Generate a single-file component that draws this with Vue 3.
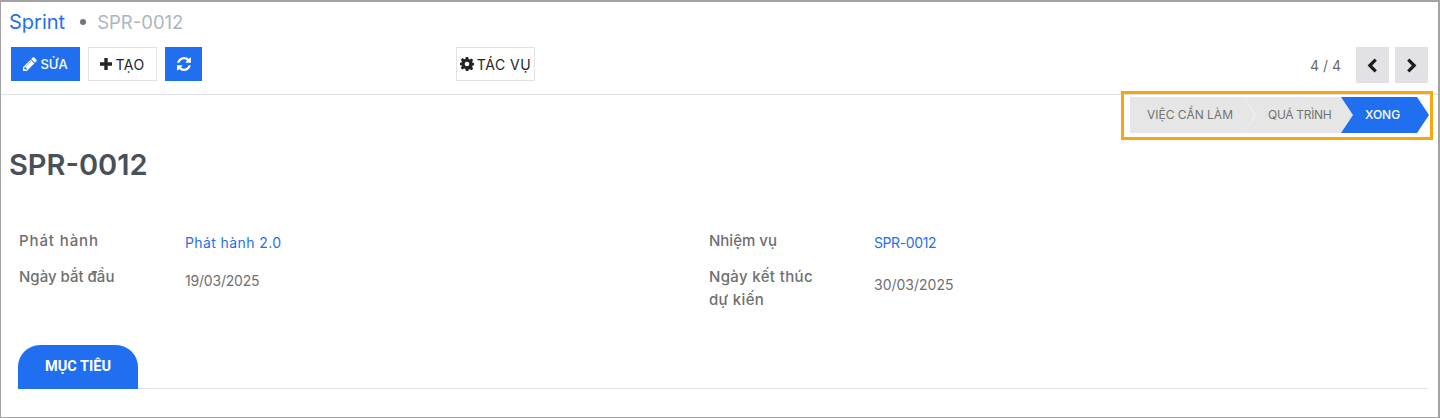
<template>
  <div class="page">
    <header class="panel">
      <div class="crumbs">
        <span class="crumb-link">Sprint</span>
        <span class="dot"></span>
        <span class="crumb-current">SPR-0012</span>
      </div>
      <div class="toolbar">
        <div class="left-actions">
          <button class="btn primary edit">
            <svg class="ico" viewBox="0 0 1536 1536" width="14" height="14"><path fill="currentColor" d="M363 1408l91-91-235-235-91 91v107h128v128h107zM886 480q0-22-22-22-10 0-17 7L305 1007q-7 7-7 17 0 22 22 22 10 0 17-7l542-542q7-7 7-17zM832 288l416 416-832 832H0v-416zM1515 384q0 53-37 90l-166 166-416-416 166-165q36-38 90-38 53 0 91 38l235 234q37 39 37 91z"/></svg>
            SỬA
          </button>
          <button class="btn outline create">
            <svg class="ico" viewBox="0 0 12 12" width="12" height="12"><path fill="currentColor" d="M4.3 0h3.400v4.300H12v3.400H7.700V12H4.300V7.700H0V4.300h4.300z"/></svg>
            TẠO
          </button>
          <button class="btn primary refresh">
            <svg viewBox="0 0 1536 1536" width="14" height="14"><path fill="currentColor" d="M1511 928q0 5-1 7-64 268-268 434.500T764 1536q-146 0-282.500-55T238 1324l-129 129q-19 19-45 19t-45-19-19-45V960q0-26 19-45t45-19h448q26 0 45 19t19 45-19 45l-137 137q71 66 161 102t187 36q134 0 250-65t186-179q11-17 53-117 8-23 30-23h192q13 0 22.500 9.500t9.500 22.500zM1536 128v448q0 26-19 45t-45 19h-448q-26 0-45-19t-19-45 19-45l138-138Q969 256 768 256q-134 0-250 65T332 500q-11 17-53 117-8 23-30 23H50q-13 0-22.500-9.500T18 608v-7q65-268 270-434.500T768 0q146 0 284 55.500T1297 212l130-129q19-19 45-19t45 19 19 45z"/></svg>
          </button>
        </div>
        <button class="btn outline actions">
          <svg class="ico" viewBox="0 0 24 24" width="14" height="14"><path fill="currentColor" fill-rule="evenodd" d="M10 0h4l.7 3.300 2.200.9 2.900-1.800 2.800 2.800-1.800 2.900.9 2.200L24 10v4l-2.300.7-.9 2.200 1.800 2.900-2.800 2.800-2.900-1.800-2.200.9L14 24h-4l-.7-3.300-2.200-.9-2.900 1.800-2.800-2.800 1.800-2.900-.9-2.200L0 14v-4l2.300-.2.900-2.200-1.800-2.900 2.800-2.800 2.900 1.800 2.200-.9zM12 8a4 4 0 1 0 0 8 4 4 0 0 0 0-8z"/></svg>
          TÁC VỤ
        </button>
        <div class="pager">
          <span class="count">4 / 4</span>
          <button class="page-btn first">
            <svg viewBox="0 0 10 14" width="11" height="15"><path fill="none" stroke="currentColor" stroke-width="3" d="M8 1.500 2.500 7 8 12.500"/></svg>
          </button>
          <button class="page-btn">
            <svg viewBox="0 0 10 14" width="11" height="15"><path fill="none" stroke="currentColor" stroke-width="3" d="M2 1.500 7.500 7 2 12.500"/></svg>
          </button>
        </div>
      </div>
    </header>

    <div class="status-wrap">
      <div class="statusbar">
        <div class="step s1">VIỆC CẦN LÀM</div>
        <div class="step s2">QUÁ TRÌNH</div>
        <div class="step s3">XONG</div>
      </div>
    </div>

    <h1 class="title">SPR-0012</h1>

    <section class="form">
      <div class="col">
        <div class="row">
          <div class="label wide">Phát hành</div>
          <div class="value link wide-link">Phát hành 2.0</div>
        </div>
        <div class="row">
          <div class="label">Ngày bắt đầu</div>
          <div class="value narrow">19/03/2025</div>
        </div>
      </div>
      <div class="col">
        <div class="row">
          <div class="label">Nhiệm vụ</div>
          <div class="value link narrower">SPR-0012</div>
        </div>
        <div class="row">
          <div class="label two-line">Ngày kết thúc<br />dự kiến</div>
          <div class="value tall">30/03/2025</div>
        </div>
      </div>
    </section>

    <nav class="tabs">
      <div class="tab">MỤC TIÊU</div>
    </nav>
  </div>
</template>

<script setup>
</script>

<style>
html, body { margin: 0; background: #fff; }
</style>

<style scoped>
.page {
  box-sizing: border-box;
  width: 1440px;
  height: 418px;
  border: 1px solid #a3a3a3;
  border-right-width: 2px;
  border-top-width: 2px;
  position: relative;
  overflow: hidden;
  font-family: "Inter", "Noto Sans", sans-serif;
  color: #666;
  background: #fff;
}
.panel {
  box-sizing: border-box;
  height: 93px;
  border-bottom: 1px solid #dee2e6;
  padding: 0 10px;
}
.crumbs {
  display: flex;
  align-items: center;
  height: 40px;
  font-size: 20px;
  margin-left: -2px;
}
.crumb-link { color: #1f6ff0; }
.dot { width: 6px; height: 6px; border-radius: 50%; background: #6c757d; margin: 0 11px 0 15px; }
.crumb-current { color: #adb5bd; font-size: 18.500px; }
.toolbar {
  display: grid;
  grid-template-columns: 445px 1fr auto;
  align-items: start;
  margin-top: 5px;
}
.left-actions { display: flex; gap: 8px; }
.btn {
  box-sizing: border-box;
  height: 34px;
  padding: 0;
  border: 1px solid transparent;
  font-family: inherit;
  font-size: 13px;
  display: inline-flex;
  align-items: center;
  justify-content: center;
  gap: 3px;
  border-radius: 0;
}
.primary { background: #1f6ff0; color: #fff; font-weight: 500; }
.outline { background: #fff; border-color: #e2e2e2; color: #212529; font-size: 14px; letter-spacing: 0.5px; }
.edit { width: 69px; }
.create { width: 69px; }
.refresh { width: 37px; }
.actions { width: 79px; justify-self: start; }
.pager { display: flex; align-items: center; }
.count { font-size: 14px; color: #6b6b6b; margin-right: 15px; }
.page-btn {
  width: 33px;
  height: 36px;
  background: #e2e2e4;
  border: none;
  padding: 0;
  color: #1b1b1b;
  display: flex;
  align-items: center;
  justify-content: center;
}
.page-btn.first { margin-right: 6px; }

.status-wrap {
  position: absolute;
  left: 1120px;
  top: 89px;
  width: 312px;
  height: 49px;
  box-sizing: border-box;
  border: 3px solid #f5a70c;
  padding: 3px 0 0 6px;
}
.statusbar {
  display: flex;
  width: 299px;
  height: 36px;
  background: #e6e6e6;
  clip-path: polygon(0 0, 287px 0, 299px 18px, 287px 36px, 0 36px);
}
.step {
  box-sizing: border-box;
  font-size: 12px;
  line-height: 36px;
  height: 36px;
  color: #737373;
  white-space: nowrap;
  position: relative;
}
.s1 { width: 125px; padding-left: 17px; }
.s2 { width: 86px; padding-left: 13px; letter-spacing: -0.3px; }
.s1::after {
  content: "";
  position: absolute;
  right: -1px;
  top: 0;
  width: 12px;
  height: 36px;
  background: #efefef;
  clip-path: polygon(0 0, 100% 50%, 0 100%, 0 97%, 88% 50%, 0 3%);
}
.s3 {
  flex: 1;
  background: #1f6ff0;
  color: #fff;
  font-weight: 500;
  padding-left: 24px;
  clip-path: polygon(0 0, 100% 0, 100% 100%, 0 100%, 12px 50%);
}

.title {
  margin: 52px 0 0 8px;
  font-size: 29px;
  line-height: 36px;
  font-weight: 600;
  color: #495057;
}
.form {
  display: grid;
  grid-template-columns: 689px 1fr;
  margin: 44px 0 0 18px;
}
.col { display: flex; flex-direction: column; }
.row { display: grid; grid-template-columns: 166px 1fr; }
.col:last-child .row { grid-template-columns: 165px 1fr; margin-left: 1px; }
.row + .row { margin-top: 10px; }
.label { font-size: 15px; line-height: 24px; color: #6f6f6f; font-weight: 500; }
.label.wide { letter-spacing: 0.9px; margin-top: 2px; }
.col:last-child .row:first-child .label { margin-top: 2px; }
.label.two-line { line-height: 23px; letter-spacing: 0.35px; }
.value { font-size: 14px; line-height: 24px; padding-top: 4px; color: #6f6f6f; }
.value.link { color: #1f6ff0; }
.value.wide-link { letter-spacing: 0.4px; }
.value.narrow { letter-spacing: -0.2px; }
.value.narrower { letter-spacing: -0.4px; }
.value.tall { padding-top: 8px; }
.tabs {
  position: absolute;
  left: 17px;
  right: 10px;
  top: 343px;
  height: 44px;
  box-sizing: border-box;
  border-bottom: 1px solid #dee2e6;
}
.tab {
  width: 120px;
  height: 44px;
  background: #1f6ff0;
  color: #fff;
  border-radius: 22px 22px 0 0;
  text-align: center;
  font-size: 14.500px;
  font-weight: 700;
  line-height: 44px;
  font-family: "Roboto", sans-serif;
}
</style>
